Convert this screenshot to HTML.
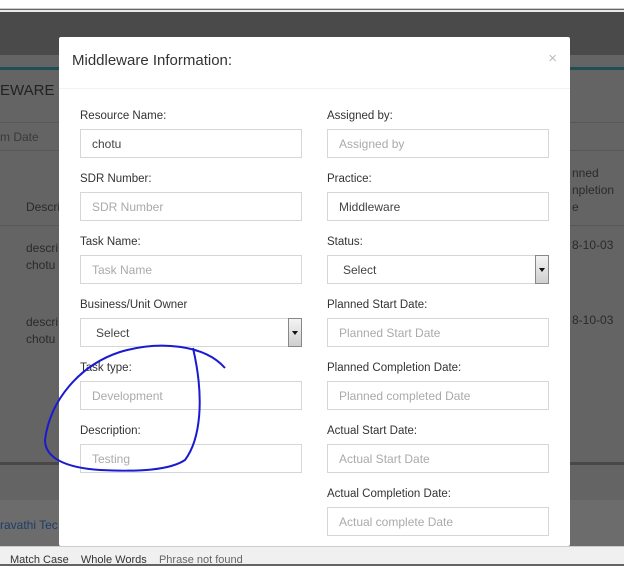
<!DOCTYPE html>
<html><head><style>
*{margin:0;padding:0;box-sizing:border-box}
body{width:624px;height:564px;overflow:hidden;position:relative;background:#646464;font-family:"Liberation Sans",sans-serif;font-size:12px}
.a{position:absolute}
.bg{color:#2a2a2a;font-size:12px}
.modal{position:absolute;left:59px;top:37px;width:511px;height:509px;background:#fff;border-radius:2px}
.lbl{position:absolute;font-size:11.5px;color:#333}
.inp{position:absolute;width:222px;height:29px;border:1px solid #d6d6d6;background:#fff;font-size:12px;color:#aaa;padding:7px 0 0 11px}
.inp.v{color:#444}
.sel{color:#444;padding-left:15px}
.arr{position:absolute;right:-1px;top:-1px;width:14px;height:29px;border:1px solid #888;background:linear-gradient(#f4f4f4,#cfcfcf)}
.arr:after{content:"";position:absolute;left:3px;top:12px;border-left:3px solid transparent;border-right:3px solid transparent;border-top:4px solid #111}
</style></head><body>
<div class="a" style="left:0;top:0;width:624px;height:9px;background:#fff;border-bottom:1px solid #ccc"></div>
<div class="a" style="left:0;top:10px;width:624px;height:2px;background:#e8e8e8"></div>
<div class="a" style="left:0;top:12px;width:624px;height:43px;background:#4a4a4a"></div>
<div class="a" style="left:0;top:67px;width:624px;height:3px;background:#1f4f55"></div>
<div class="a bg" style="left:0;top:82px;font-size:15px;color:#222">EWARE</div>
<div class="a" style="left:0;top:122px;width:624px;height:1px;background:#585858"></div>
<div class="a bg" style="left:0;top:130px;color:#3a3a3a">m Date</div>
<div class="a" style="left:0;top:150px;width:624px;height:1px;background:#585858"></div>
<div class="a bg" style="left:26px;top:200px">Descri</div>
<div class="a" style="left:0;top:225px;width:624px;height:1px;background:#585858"></div>
<div class="a bg" style="left:26px;top:240px;line-height:17px">descri<br>chotu</div>
<div class="a bg" style="left:26px;top:314px;line-height:17px">descri<br>chotu</div>
<div class="a bg" style="left:572px;top:165px;line-height:17px">nned<br>npletion<br>e</div>
<div class="a bg" style="left:572px;top:238px">8-10-03</div>
<div class="a bg" style="left:572px;top:313px">8-10-03</div>
<div class="a" style="left:0;top:462px;width:624px;height:3px;background:#484848"></div>
<div class="a" style="left:0;top:500px;width:624px;height:46px;background:#6c6c6c"></div>
<div class="a bg" style="left:0;top:518px;color:#1e3c6a">ravathi Tec</div>
<div class="a" style="left:0;top:546px;width:624px;height:18px;background:#f0f0f0;border-top:1px solid #ccc;font-size:11px;color:#333;padding:7px 0 0 10px;white-space:nowrap">Match Case &nbsp;&nbsp; Whole Words &nbsp;&nbsp; <span style="color:#666">Phrase not found</span></div>
<div class="modal">
<div class="a" style="left:13px;top:15px;font-size:15px;color:#333">Middleware Information:</div>
<div class="a" style="right:13px;top:13px;font-size:15px;color:#bbb">×</div>
<div class="a" style="left:0;top:51px;width:511px;height:1px;background:#f2f2f2"></div>
</div>
<div class="lbl" style="left:80px;top:110px">Resource Name:</div><div class="inp v" style="left:80px;top:129px">chotu</div>
<div class="lbl" style="left:80px;top:173px">SDR Number:</div><div class="inp" style="left:80px;top:192px">SDR Number</div>
<div class="lbl" style="left:80px;top:236px">Task Name:</div><div class="inp" style="left:80px;top:255px">Task Name</div>
<div class="lbl" style="left:80px;top:299px">Business/Unit Owner</div><div class="inp sel" style="left:80px;top:318px">Select<div class="arr"></div></div>
<div class="lbl" style="left:80px;top:362px">Task type:</div><div class="inp" style="left:80px;top:381px">Development</div>
<div class="lbl" style="left:80px;top:425px">Description:</div><div class="inp" style="left:80px;top:444px">Testing</div>
<div class="lbl" style="left:327px;top:110px">Assigned by:</div><div class="inp" style="left:327px;top:129px">Assigned by</div>
<div class="lbl" style="left:327px;top:173px">Practice:</div><div class="inp v" style="left:327px;top:192px">Middleware</div>
<div class="lbl" style="left:327px;top:236px">Status:</div><div class="inp sel" style="left:327px;top:255px">Select<div class="arr"></div></div>
<div class="lbl" style="left:327px;top:299px">Planned Start Date:</div><div class="inp" style="left:327px;top:318px">Planned Start Date</div>
<div class="lbl" style="left:327px;top:362px">Planned Completion Date:</div><div class="inp" style="left:327px;top:381px">Planned completed Date</div>
<div class="lbl" style="left:327px;top:425px">Actual Start Date:</div><div class="inp" style="left:327px;top:444px">Actual Start Date</div>
<div class="lbl" style="left:327px;top:488px">Actual Completion Date:</div><div class="inp" style="left:327px;top:507px">Actual complete Date</div>
<svg class="a" style="left:0;top:0" width="624" height="564"><path d="M225,368 C205,345 160,340 120,352 C80,365 50,400 45,440 C45,460 70,468 100,470 C140,472 170,470 185,460 C200,440 205,400 193,348" fill="none" stroke="#1a1ad0" stroke-width="2"/></svg>
</body></html>
